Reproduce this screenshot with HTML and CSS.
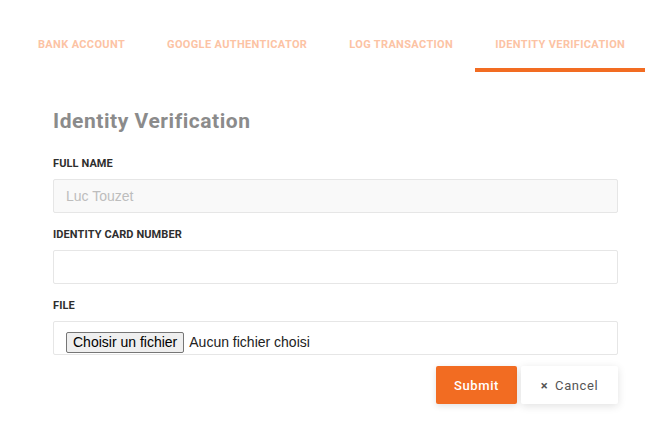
FILE: index.html
```html
<!DOCTYPE html>
<html lang="fr">
<head>
<meta charset="utf-8">
<title>Identity Verification</title>
<link rel="stylesheet" href="styles.css">
</head>
<body>
<nav class="tabs">
  <a class="tab">BANK ACCOUNT</a>
  <a class="tab">GOOGLE AUTHENTICATOR</a>
  <a class="tab">LOG TRANSACTION</a>
  <a class="tab active">IDENTITY VERIFICATION</a>
</nav>
<main class="panel">
  <h2 class="title">Identity Verification</h2>
  <div class="field">
    <label class="label">FULL NAME</label>
    <div class="input disabled">Luc Touzet</div>
  </div>
  <div class="field">
    <label class="label">IDENTITY CARD NUMBER</label>
    <div class="input"></div>
  </div>
  <div class="field">
    <label class="label">FILE</label>
    <div class="input file">
      <span class="file-btn">Choisir un fichier</span>
      <span class="file-name">Aucun fichier choisi</span>
    </div>
  </div>
  <div class="actions">
    <button class="btn submit">Submit</button>
    <button class="btn cancel"><span class="x">×</span> Cancel</button>
  </div>
</main>
</body>
</html>
```
FILE: styles.css
```css
* { box-sizing: border-box; }
body {
  margin: 0;
  background: #fff;
  font-family: Roboto, "Liberation Sans", sans-serif;
}
.tabs {
  display: flex;
  gap: 2px;
  padding-left: 18px;
}
.tab {
  padding: 38px 20px 16px;
  font-size: 11px;
  line-height: 14px;
  font-weight: 700;
  color: #fcc3a4;
  border-bottom: 4px solid transparent;
  letter-spacing: 0.35px;
}
.tab.active {
  border-bottom-color: #f26c22;
}
.panel {
  width: 565px;
  margin-left: 53px;
  padding-top: 37px;
}
.title {
  margin: 0 0 24px;
  font-size: 21px;
  line-height: 24px;
  font-weight: 700;
  color: #8b8b8b;
  letter-spacing: 0.55px;
}
.field {
  display: flex;
  flex-direction: column;
  margin-bottom: 15px;
}
.label {
  font-size: 11px;
  line-height: 14px;
  font-weight: 700;
  color: #2e2e2e;
  margin-bottom: 8px;
  letter-spacing: 0.1px;
}
.input {
  height: 34px;
  border: 1px solid #e6e6e6;
  border-radius: 2px;
  background: #fff;
  padding: 0 12px;
  display: flex;
  align-items: center;
  font-family: "Liberation Sans", Arial, sans-serif;
  font-size: 14px;
}
.input.disabled {
  background: #f9f9f9;
  color: #bdbdbd;
}
.input.file {
  align-items: flex-start;
  padding-top: 10px;
  color: #222;
}
.file-btn {
  display: inline-block;
  height: 21px;
  line-height: 19px;
  padding: 0 6px;
  border: 1px solid #767676;
  border-radius: 2px;
  background: #efefef;
  color: #000;
  margin-right: 5px;
}
.file-name {
  line-height: 21px;
}
.actions {
  display: flex;
  justify-content: flex-end;
  gap: 4px;
  margin-top: -4px;
  padding-bottom: 12px;
}
.btn {
  height: 38px;
  border: none;
  border-radius: 2px;
  font-family: Roboto, "Liberation Sans", sans-serif;
  font-size: 13px;
  letter-spacing: 0.6px;
  cursor: pointer;
}
.submit {
  width: 81px;
  background: #f26c22;
  color: #fff;
  font-weight: 500;
  box-shadow: 0 2px 6px rgba(0,0,0,0.12);
}
.cancel {
  width: 97px;
  background: #fff;
  color: #555;
  box-shadow: 0 2px 8px rgba(0,0,0,0.12);
}
.cancel .x {
  margin-right: 3px;
  font-weight: 700;
}
```
